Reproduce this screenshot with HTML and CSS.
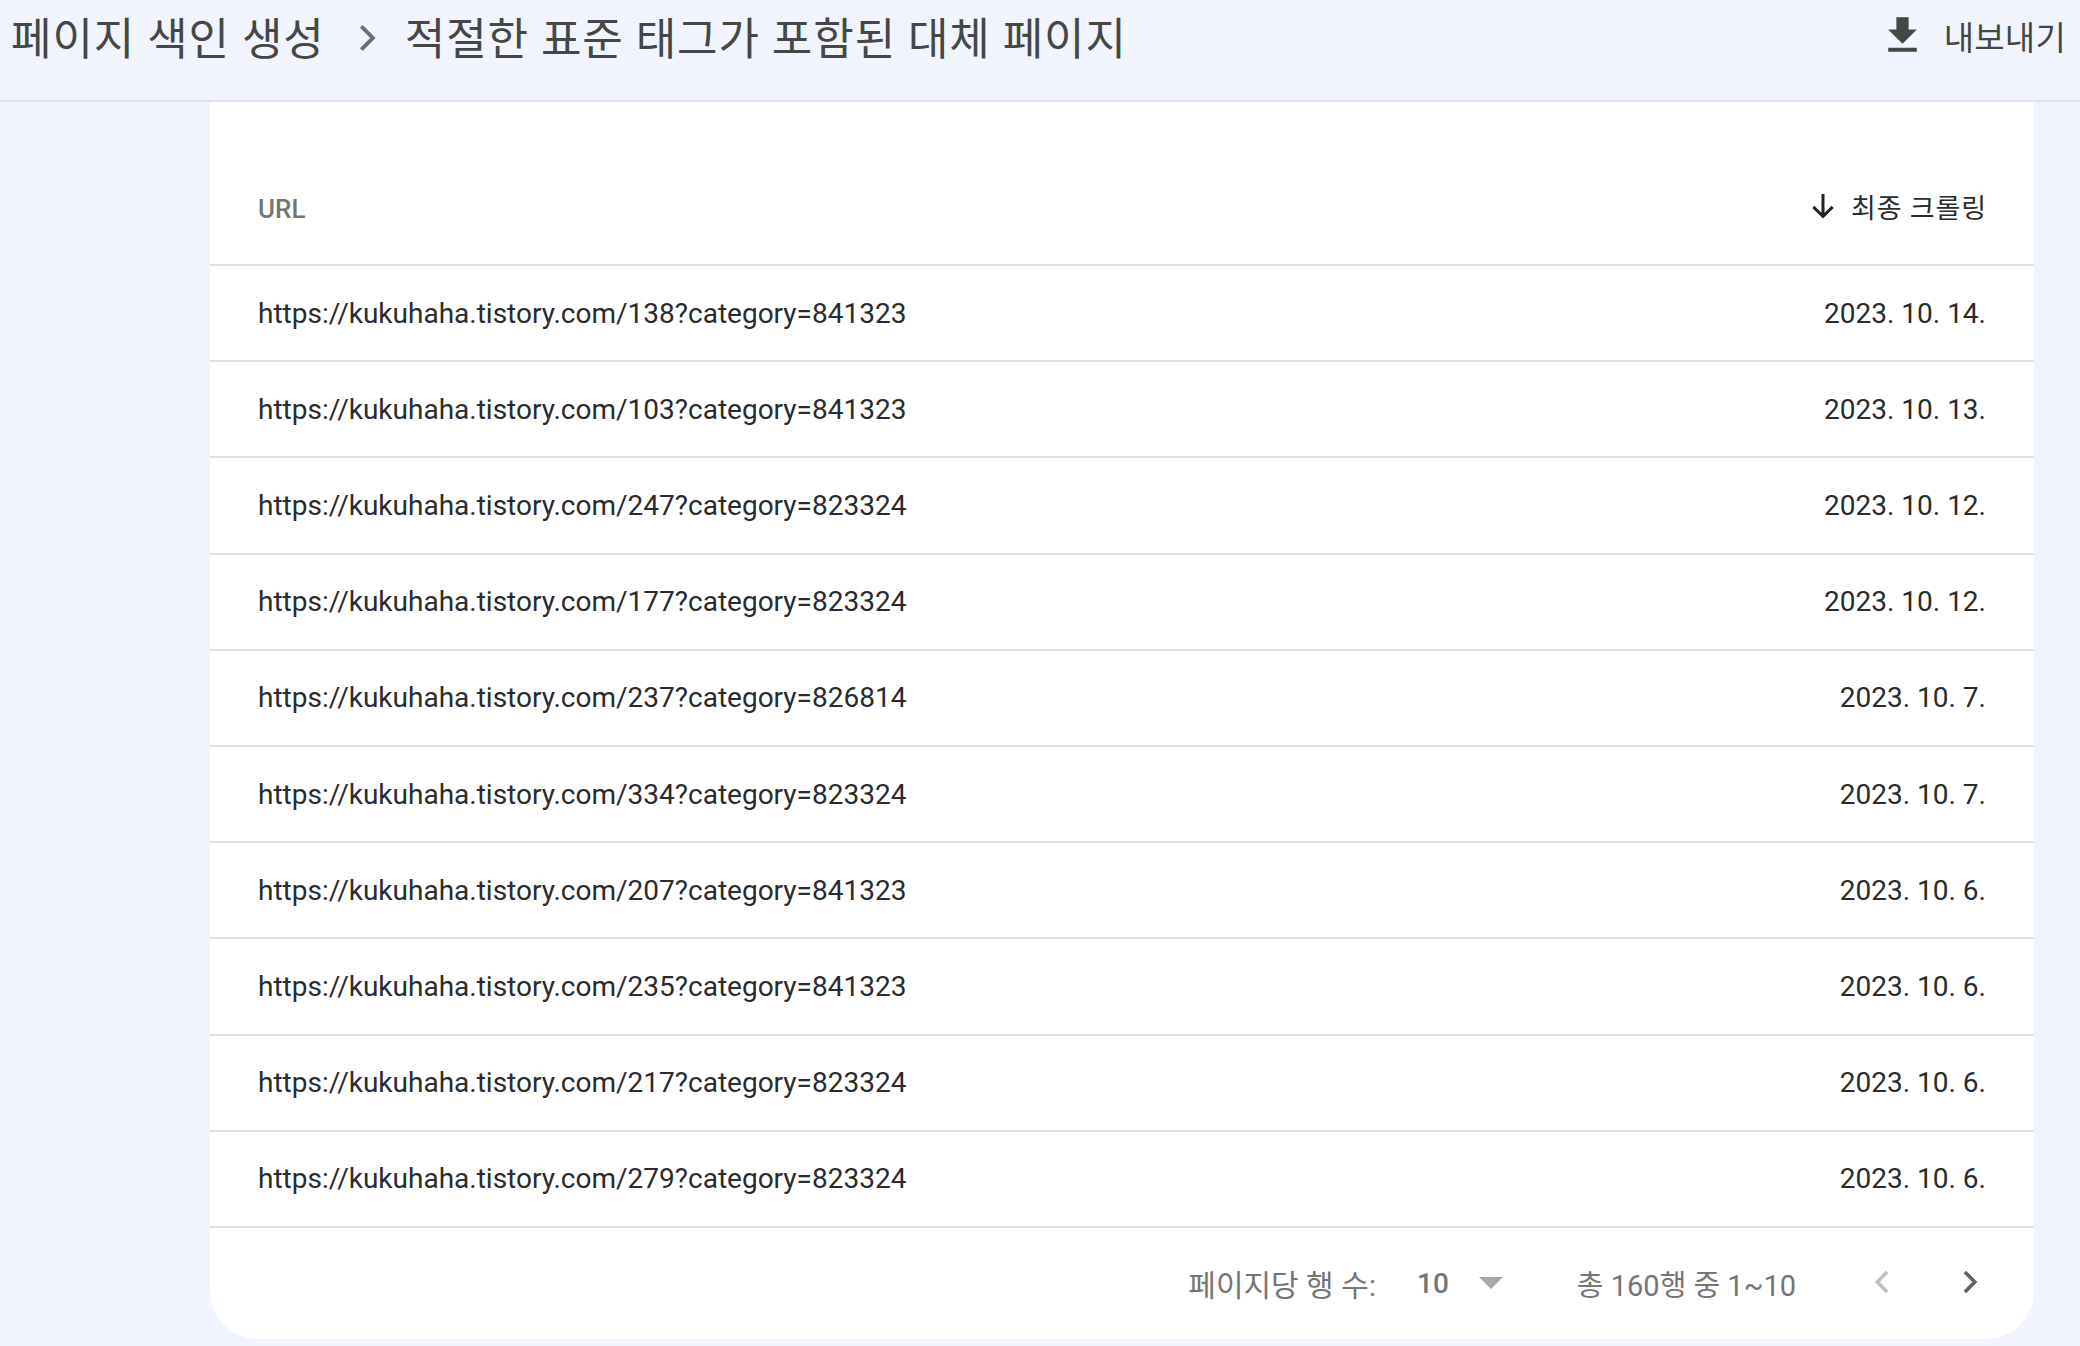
FILE: index.html
```html
<!DOCTYPE html>
<html lang="ko">
<head>
<meta charset="utf-8">
<title>적절한 표준 태그가 포함된 대체 페이지</title>
<link rel="stylesheet" href="styles.css">
</head>
<body>
<header class="topbar">
  <div class="crumbs">
    <span>페이지 색인 생성</span>
    <svg class="crumb-sep" viewBox="0 0 24 24" width="42" height="42"><path d="M7.6 5.4 14.2 12l-6.6 6.6" fill="none" stroke="#6b6e72" stroke-width="2.2"/></svg>
    <span>적절한 표준 태그가 포함된 대체 페이지</span>
  </div>
  <div class="export">
    <svg viewBox="0 0 24 24" width="49" height="49"><path d="M19 9h-4V3H9v6H5l7 7 7-7zM5 18v2h14v-2H5z" fill="#444746"/></svg>
    <span>내보내기</span>
  </div>
</header>
<main class="card">
  <div class="row head">
    <span class="url-head">URL</span>
    <span class="sort">
      <svg viewBox="0 0 24 24" width="36" height="36"><path d="M12 4v15M5.6 12.6 12 19l6.4-6.4" fill="none" stroke="#202124" stroke-width="2"/></svg>
      최종 크롤링
    </span>
  </div>
  <div class="row"><span>https://kukuhaha.tistory.com/138?category=841323</span><span>2023. 10. 14.</span></div>
  <div class="row"><span>https://kukuhaha.tistory.com/103?category=841323</span><span>2023. 10. 13.</span></div>
  <div class="row"><span>https://kukuhaha.tistory.com/247?category=823324</span><span>2023. 10. 12.</span></div>
  <div class="row"><span>https://kukuhaha.tistory.com/177?category=823324</span><span>2023. 10. 12.</span></div>
  <div class="row"><span>https://kukuhaha.tistory.com/237?category=826814</span><span>2023. 10. 7.</span></div>
  <div class="row"><span>https://kukuhaha.tistory.com/334?category=823324</span><span>2023. 10. 7.</span></div>
  <div class="row"><span>https://kukuhaha.tistory.com/207?category=841323</span><span>2023. 10. 6.</span></div>
  <div class="row"><span>https://kukuhaha.tistory.com/235?category=841323</span><span>2023. 10. 6.</span></div>
  <div class="row"><span>https://kukuhaha.tistory.com/217?category=823324</span><span>2023. 10. 6.</span></div>
  <div class="row"><span>https://kukuhaha.tistory.com/279?category=823324</span><span>2023. 10. 6.</span></div>
  <footer class="pager">
    <span class="per-page">페이지당 행 수:</span>
    <span class="size">10</span>
    <span class="caret"></span>
    <span class="range">총 160행 중 1~10</span>
    <svg class="nav-prev" viewBox="0 0 24 24" width="36" height="36"><path d="M15.4 5.4 8.8 12l6.6 6.6" fill="none" stroke="#bdc1c6" stroke-width="2.4"/></svg>
    <svg class="nav-next" viewBox="0 0 24 24" width="36" height="36"><path d="M8.6 5.4 15.2 12l-6.6 6.6" fill="none" stroke="#5f6368" stroke-width="2.4"/></svg>
  </footer>
</main>
</body>
</html>
```

FILE: styles.css
```css
* { box-sizing: border-box; }
html, body { margin: 0; height: 100%; }
body {
  background: #f1f4fc;
  font-family: Roboto, "Noto Sans CJK KR", sans-serif;
  color: #2a2b2d;
  overflow: hidden;
}
.topbar {
  height: 102px;
  margin-left: 1px;
  border-bottom: 2px solid #e0e3e7;
  display: flex;
  justify-content: space-between;
  align-items: flex-start;
  padding: 0 14px 0 10px;
}
.crumbs {
  display: flex;
  align-items: center;
  height: 71px;
  font-size: 44px;
  letter-spacing: 0.95px;
  color: #444746;
}
.crumb-sep { margin: 5px 15px 0 23px; }
.export {
  display: flex;
  align-items: center;
  height: 71px;
  font-size: 33px;
  letter-spacing: 0.2px;
  color: #444746;
  gap: 17px;
}
.card {
  width: 1824px;
  margin-left: 210px;
  height: 1237px;
  background: #fff;
  border-radius: 0 0 48px 48px;
}
.row {
  height: 96.2px;
  border-bottom: 2px solid #e0e0e0;
  display: flex;
  justify-content: space-between;
  align-items: center;
  padding: 0 48px;
  font-size: 28px;
}
.head {
  height: 164px;
  padding-top: 48px;
  font-size: 27px;
}
.url-head { color: #757575; font-weight: 500; font-size: 26px; margin-top: 4px; }
.sort { display: flex; align-items: center; gap: 10px; letter-spacing: 0.8px; margin-bottom: 2px; margin-right: -0.8px; }
.pager {
  height: 111px;
  display: flex;
  align-items: center;
  justify-content: flex-end;
  padding-right: 46px;
  font-size: 28px;
  color: #757575;
}
.per-page { font-size: 30px; }
.size { margin-left: 41px; font-weight: 500; margin-top: 1px; }
.caret {
  margin-left: 30px;
  border-left: 12px solid transparent;
  border-right: 12px solid transparent;
  border-top: 12px solid #a8a8a8;
}
.range { margin-left: 74px; font-size: 29px; }
.nav-prev { margin-left: 68px; margin-bottom: 3px; }
.nav-next { margin-left: 52px; margin-bottom: 3px; }
```
